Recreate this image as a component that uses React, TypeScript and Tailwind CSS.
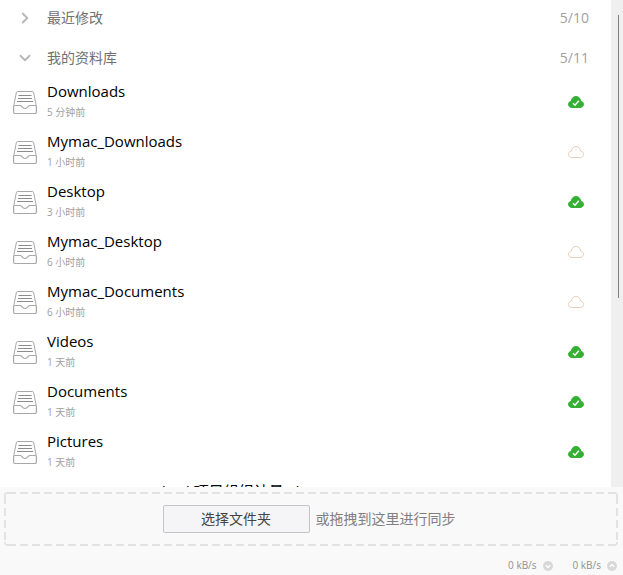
import clsx from 'clsx';
import { ChevronDown, ChevronRight } from 'lucide-react';

type Library = {
  name: string;
  time: string;
  synced: boolean;
};

const libraries: Library[] = [
  { name: 'Downloads', time: '5 分钟前', synced: true },
  { name: 'Mymac_Downloads', time: '1 小时前', synced: false },
  { name: 'Desktop', time: '3 小时前', synced: true },
  { name: 'Mymac_Desktop', time: '6 小时前', synced: false },
  { name: 'Mymac_Documents', time: '6 小时前', synced: false },
  { name: 'Videos', time: '1 天前', synced: true },
  { name: 'Documents', time: '1 天前', synced: true },
  { name: 'Pictures', time: '1 天前', synced: true },
  { name: 'NSIS_Common_da_d 项目组织计量_d', time: '1 天前', synced: true },
];

function TrayIcon() {
  return (
    <svg viewBox="0 0 24 24" className="size-6 shrink-0" fill="none" stroke="#a8a8a8">
      <path d="M.8 15.500 3.300 2.800q.3-1.300 1.500-1.300h14.400q1.200 0 1.500 1.300l2.500 12.700" />
      <path
        d="M.6 16.500q0-1 1-1h5.600c1.800 0 1.800 3 4.800 3s3-3 4.800-3h5.600q1 0 1 1v5.500q0 1.500-1.500 1.500H2.100Q.6 23.500.6 22z"
        strokeWidth="1.200"
      />
      <path d="M5.500 5.500h13M5 8.500h14M4 11.500h16" stroke="#8c8c8c" />
    </svg>
  );
}

function CloudIcon({ synced }: { synced: boolean }) {
  return (
    <svg viewBox="0 0 16 12" className="h-3 w-4 shrink-0" role="img" aria-label={synced ? '已同步' : '未同步'}>
      <path
        d="M4 11.500C2 11.500.5 10.200.5 8.300c0-1.700 1.100-2.800 2.800-3.100C3.600 2.300 5.400.5 8 .5s4.400 1.800 4.700 4.700c1.700.3 2.800 1.400 2.800 3.100 0 1.900-1.500 3.200-3.500 3.200z"
        fill={synced ? '#35b035' : 'none'}
        stroke={synced ? '#35b035' : '#e8cdb8'}
      />
      {synced && <path d="m5 7.200 2 2 3.800-4.400" fill="none" stroke="#fff" strokeWidth="1.400" />}
    </svg>
  );
}

function SectionHeader({ title, count, open }: { title: string; count: string; open: boolean }) {
  const Chevron = open ? ChevronDown : ChevronRight;
  return (
    <button type="button" aria-expanded={open} className="flex h-10 w-full items-center pr-5.5 pl-4 text-sm text-[#707070]">
      <Chevron className="mr-[13px] size-4.5 text-[#b8b8b8]" strokeWidth={2.5} />
      {title}
      <span className="ml-auto text-[#a0a0a0]">{count}</span>
    </button>
  );
}

function LibraryRow({ name, time, synced }: Library) {
  return (
    <li className="flex h-[50px] items-center pr-[27px] pl-[13px]">
      <TrayIcon />
      <div className="ml-2.5 min-w-0 flex-1 pb-[3px]">
        <p className="truncate text-[15px] leading-5 text-black">{name}</p>
        <p className="pt-[3px] text-[10px] leading-4 text-[#a0a0a0]">{time}</p>
      </div>
      <CloudIcon synced={synced} />
    </li>
  );
}

function Rate({ up }: { up?: boolean }) {
  return (
    <span className="flex items-center gap-1.5">
      0 kB/s
      <svg viewBox="0 0 10 10" className={clsx('size-2.5', up && 'rotate-180')}>
        <circle cx="5" cy="5" r="5" fill="#d8d8d8" />
        <path d="m2.800 4.200 2.200 2.200 2.200-2.200" fill="none" stroke="#fff" strokeWidth="1.400" />
      </svg>
    </span>
  );
}

// 8px dashes with 4px gaps, then the solid corner pieces
const dashedFrame =
  '[background:repeating-linear-gradient(90deg,transparent_0_4px,#e2e2e2_4px_12px),repeating-linear-gradient(transparent_0_4px,#e2e2e2_4px_12px)_0_0/100%_48px_no-repeat,linear-gradient(90deg,#e2e2e2_4px,transparent_4px_calc(100%-4px),#e2e2e2_calc(100%-4px))_0_0/100%_4px_no-repeat,linear-gradient(90deg,#e2e2e2_4px,transparent_4px_calc(100%-4px),#e2e2e2_calc(100%-4px))_0_100%/100%_4px_no-repeat]';

export default function App() {
  return (
    <div className="flex h-screen flex-col bg-white font-['Open_Sans','Noto_Sans_CJK_SC',sans-serif]">
      <main className="flex min-h-0 flex-1">
        <div className="min-w-0 flex-1 overflow-hidden">
          <div className="-mt-0.5">
            <SectionHeader title="最近修改" count="5/10" open={false} />
            <SectionHeader title="我的资料库" count="5/11" open />
          </div>
          <ul className="-mt-px">
            {libraries.map((library) => (
              <LibraryRow key={library.name} {...library} />
            ))}
          </ul>
        </div>
        <div className="flex w-3 justify-end bg-[#efefef] pt-[15px] pr-1">
          <div className="h-3/5 w-px bg-[#808080]" />
        </div>
      </main>
      <footer className="bg-[#f9f9f9] px-1 pt-[5px]">
        <div className={clsx('mr-px rounded-sm p-0.5', dashedFrame)}>
          <div className="flex h-[50px] items-center justify-center gap-1.5 bg-[#f9f9f9] pr-1">
            <button type="button" className="h-7 w-[147px] rounded-xs border border-[#c4c4c4] bg-[#f5f5f7] text-sm text-[#444]">
              选择文件夹
            </button>
            <span className="text-sm text-[#808080]">或拖拽到这里进行同步</span>
          </div>
        </div>
        <div className="flex h-[29px] items-center justify-end gap-5 pt-2.5 pr-0.5 text-[10px] text-[#909090]">
          <Rate />
          <Rate up />
        </div>
      </footer>
    </div>
  );
}
